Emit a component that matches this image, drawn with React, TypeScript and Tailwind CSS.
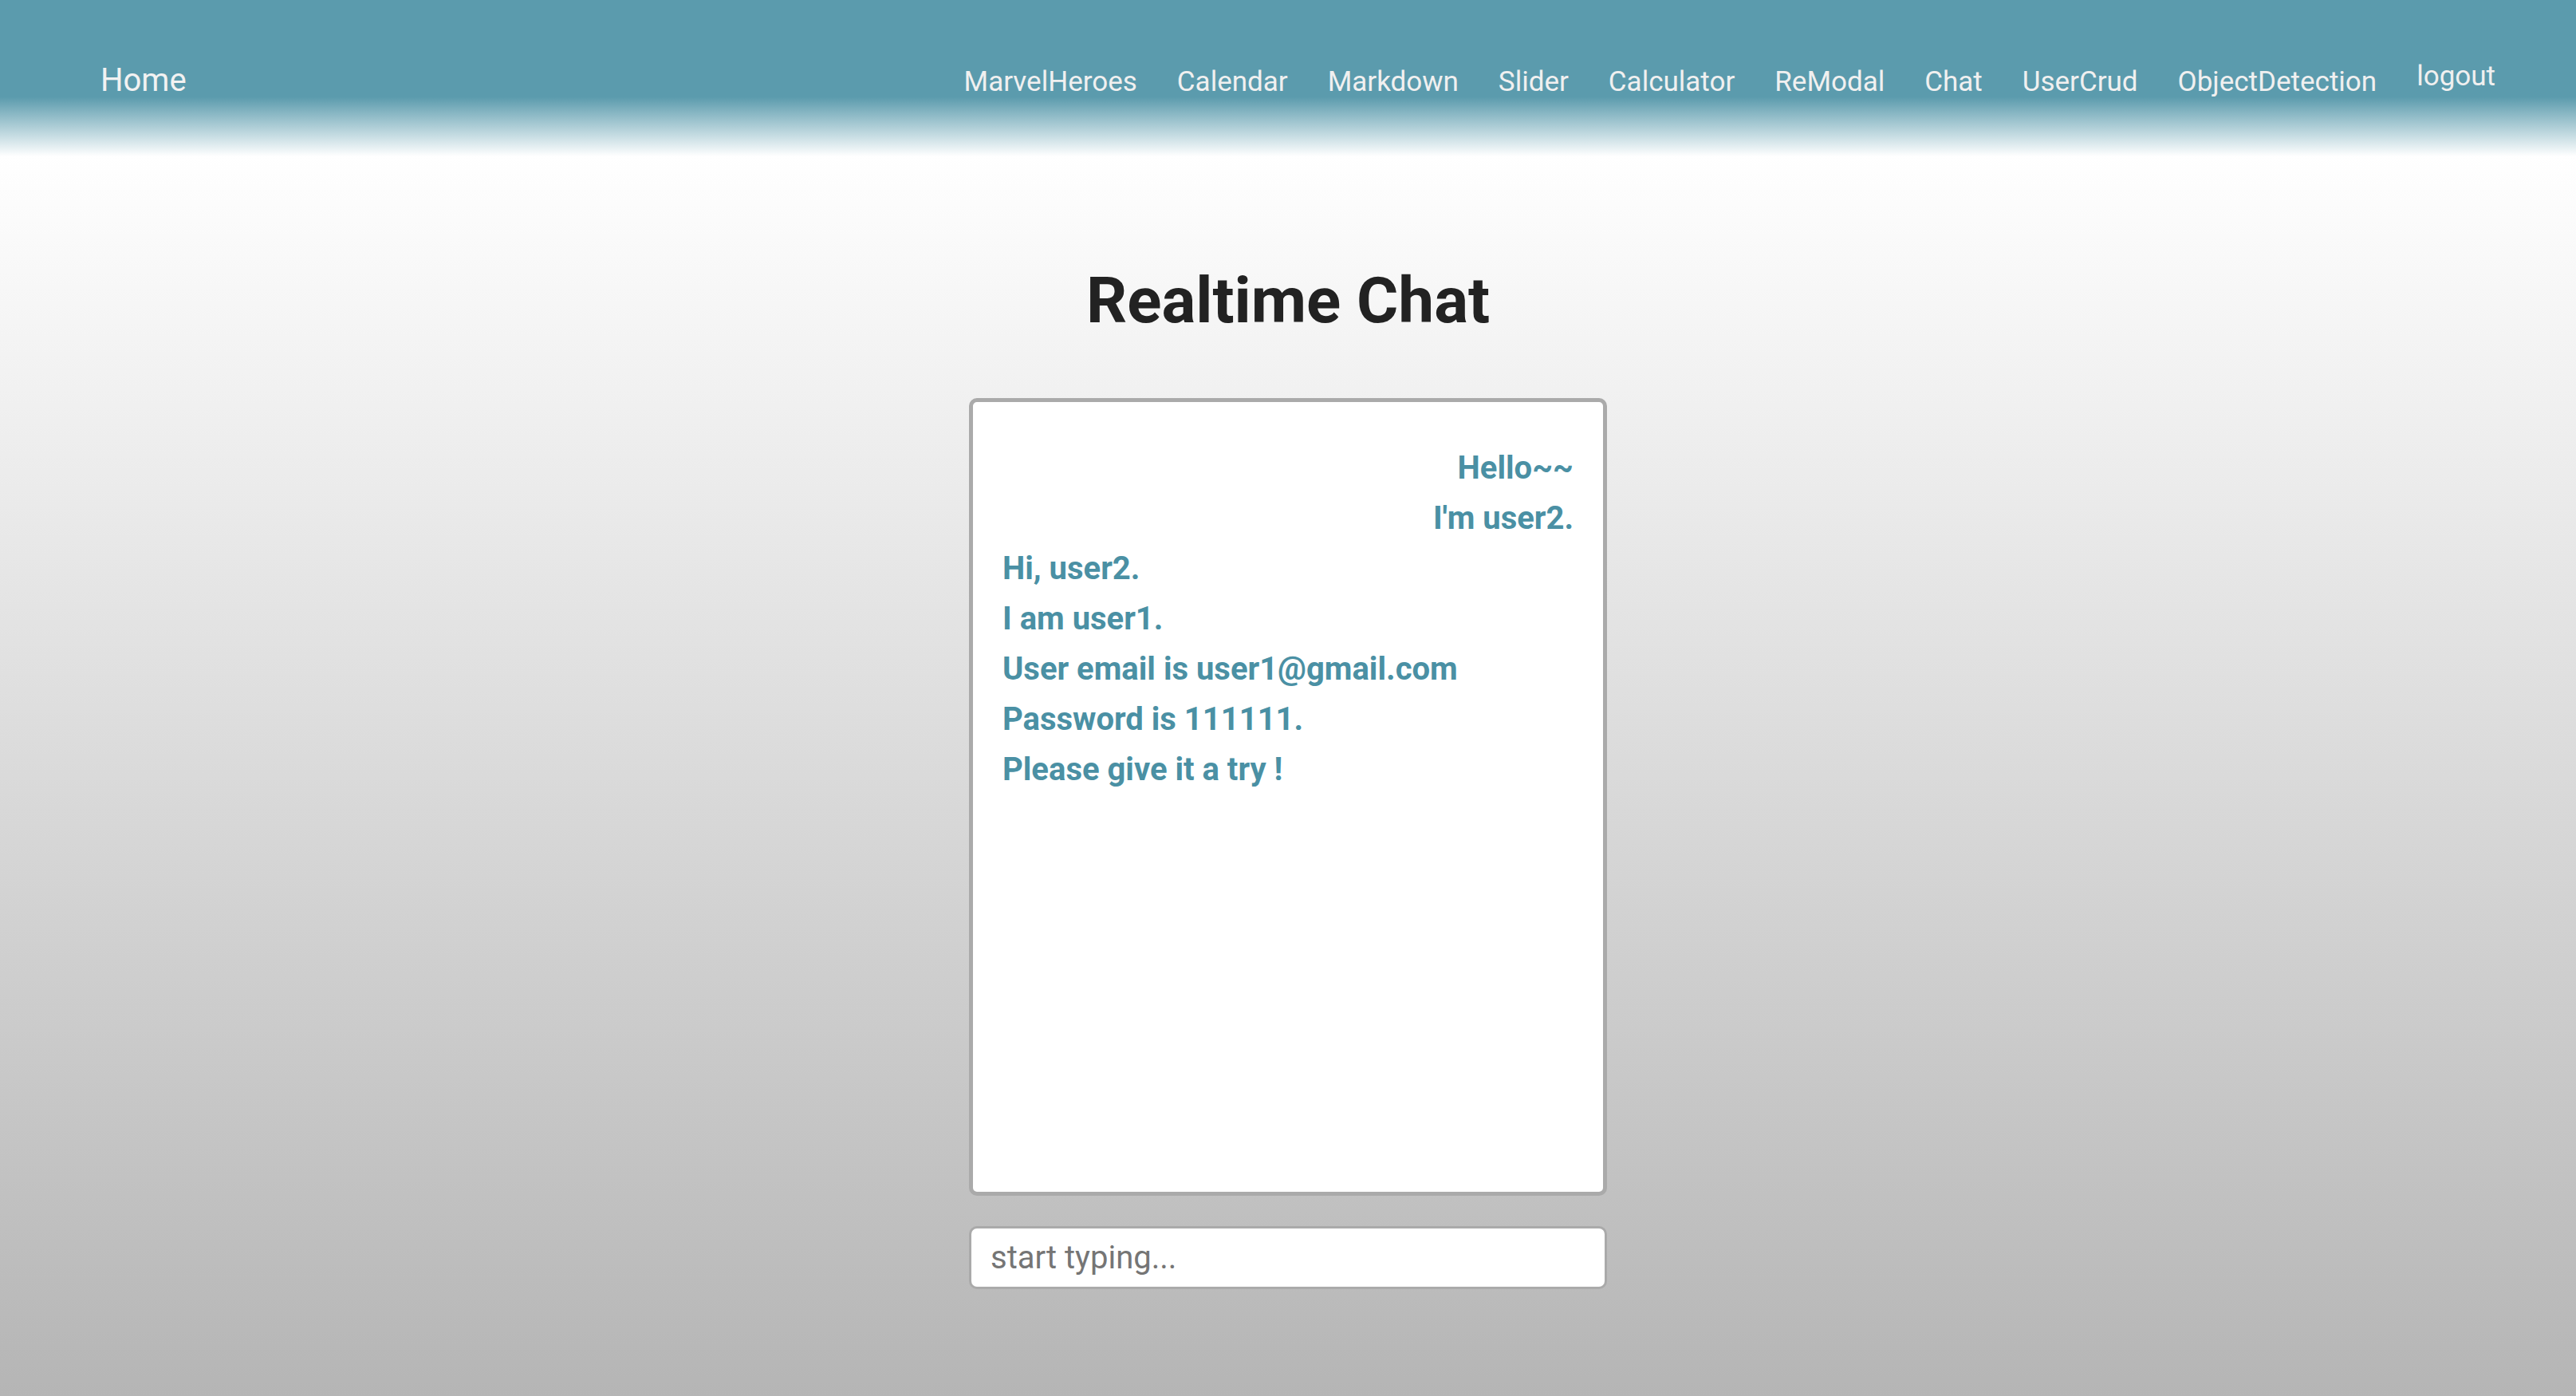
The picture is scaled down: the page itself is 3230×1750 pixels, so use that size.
import React from "react";

const links = [
  "MarvelHeroes",
  "Calendar",
  "Markdown",
  "Slider",
  "Calculator",
  "ReModal",
  "Chat",
  "UserCrud",
  "ObjectDetection",
];

const messages = [
  { text: "Hello~~", mine: true },
  { text: "I'm user2.", mine: true },
  { text: "Hi, user2.", mine: false },
  { text: "I am user1.", mine: false },
  { text: "User email is user1@gmail.com", mine: false },
  { text: "Password is 111111.", mine: false },
  { text: "Please give it a try !", mine: false },
];

const App: React.FC = () => {
  return (
    <div
      className="min-h-[1750px] w-full bg-[linear-gradient(to_bottom,#ffffff_11%,#b5b5b5_100%)]"
      style={{ fontFamily: "Roboto, 'Noto Sans', sans-serif" }}
    >
      <header className="h-[196px] bg-[linear-gradient(to_bottom,#5b9bad_0%,#5b9bad_62%,rgba(91,155,173,0)_100%)]">
        <nav className="flex items-baseline justify-between pl-[126px] pr-[101px] pt-[77px]">
          <a className="text-[40px] leading-[48px] text-[#f2f2f2]">Home</a>
          <ul className="flex items-baseline gap-[50px]">
            {links.map((l) => (
              <li key={l} className="text-[35px] leading-[40px] text-[#f0f0f0]">
                {l}
              </li>
            ))}
            <li className="-translate-y-[7px] text-[35px] leading-[40px] text-[#f0f0f0]">
              logout
            </li>
          </ul>
        </nav>
      </header>

      <main className="flex flex-col items-center">
        <h1 className="mt-[133px] text-[80px] font-bold leading-[96px] text-[#222222]">
          Realtime Chat
        </h1>
        <div className="mt-[74px] h-[1000px] w-[800px] rounded-[10px] border-[5px] border-[#aaaaaa] bg-white px-[37px] pt-[51px]">
          {messages.map((m, i) => (
            <p
              key={i}
              className={`text-[40px] font-bold leading-[63px] text-[#4a90a4] ${
                m.mine ? "text-right" : "text-left"
              }`}
            >
              {m.text}
            </p>
          ))}
        </div>
        <input
          placeholder="start typing..."
          className="mt-[38px] h-[79px] w-[800px] rounded-[10px] border-[3px] border-[#aaaaaa] bg-white px-[24px] text-[40px] text-[#333] outline-none placeholder:text-[#757575]"
        />
      </main>
    </div>
  );
};

export default App;
